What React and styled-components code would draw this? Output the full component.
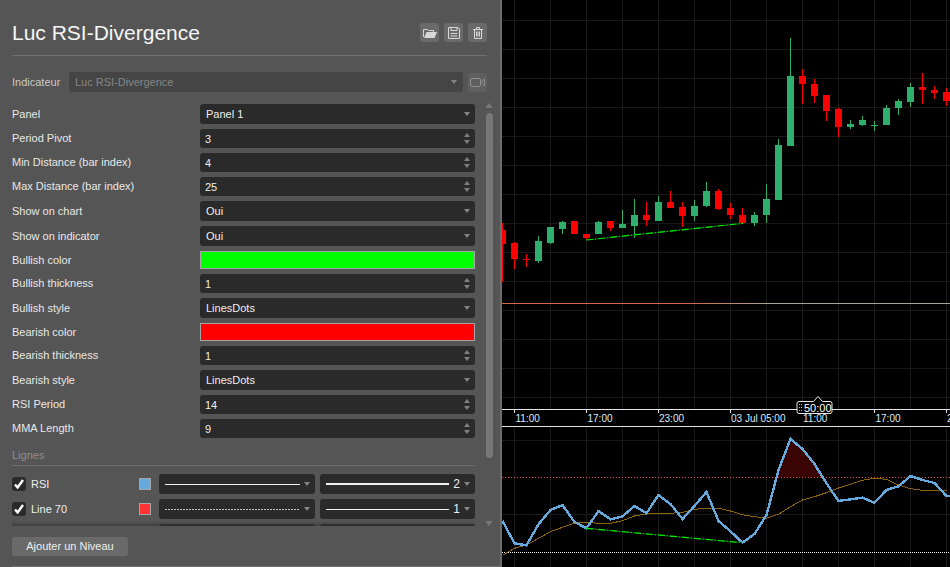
import styled, { createGlobalStyle } from "styled-components";

const GlobalStyle = createGlobalStyle`
  html, body { margin: 0; padding: 0; background: #000; }
  body { font-family: "Liberation Sans", Arial, sans-serif; }
`;

const Page = styled.div`
  display: flex;
  width: 950px;
  height: 567px;
  overflow: hidden;
`;

const Panel = styled.aside`
  flex: none;
  display: flex;
  flex-direction: column;
  box-sizing: border-box;
  width: 502px;
  height: 567px;
  padding: 23px 13px 0 12px;
  background: #555;
  border-right: 2px solid #6c6c6c;
  overflow: hidden;
`;

const Header = styled.header`
  display: flex;
  justify-content: space-between;
  height: 32px;
  border-bottom: 1px solid #707070;
`;

const Title = styled.h1`
  margin: -2px 0 0;
  font-size: 21px;
  font-weight: 400;
  line-height: 24px;
  color: #f6f6f6;
`;

const Tools = styled.div`
  display: flex;
  gap: 5px;
`;

const ToolButton = styled.button`
  display: flex;
  align-items: center;
  justify-content: center;
  width: 19px;
  height: 19px;
  padding: 0;
  border: 0;
  border-radius: 3px;
  background: ${(p) => (p.$dim ? "#5f5f5f" : "#6a6a6a")};
  color: ${(p) => (p.$dim ? "#8f8f8f" : "#d8d8d8")};
`;

const IndicatorRow = styled.div`
  display: flex;
  align-items: center;
  gap: 5px;
  margin-top: 16px;
  height: 20px;
`;

const IndicatorLabel = styled.span`
  width: 52px;
  font-size: 11px;
  color: #c8c8c8;
`;

const Arrow = styled.i`
  flex: none;
  width: 0;
  height: 0;
  margin-left: auto;
  border-left: 3px solid transparent;
  border-right: 3px solid transparent;
  border-top: 4px solid #858585;
`;

const Field = styled.div`
  display: flex;
  align-items: center;
  box-sizing: border-box;
  height: ${(p) => p.$h || 20}px;
  padding: 0 5px 0 ${(p) => p.$pad || 6}px;
  border-radius: 3px;
  background: #2a2a2a;
  font-size: 11px;
  color: #eee;
`;

const IndicatorField = styled(Field)`
  flex: 1;
  background: #454545;
  color: #868686;
  padding-right: 6px;
`;

const Body = styled.div`
  display: flex;
  gap: 10px;
  height: 422px;
  margin: 12px -6px 0 0;
`;

const ScrollPane = styled.div`
  position: relative;
  flex: none;
  width: 463px;
  overflow: hidden;

  &::after {
    content: "";
    position: absolute;
    left: -5px;
    right: -5px;
    bottom: 0;
    height: 5px;
    background: linear-gradient(rgba(50, 50, 50, 0), rgba(50, 50, 50, 0.6));
  }
`;

const Fields = styled.div`
  display: flex;
  flex-direction: column;
  gap: 5px;
`;

const Row = styled.div`
  display: grid;
  grid-template-columns: 188px 275px;
  align-items: center;
`;

const RowLabel = styled.label`
  margin-top: ${(p) => (p.$raised ? "-1px" : "0")};
  font-size: 11px;
  color: #e8e8e8;
`;

const Spin = styled.span`
  display: flex;
  flex-direction: column;
  gap: 3px;
  margin-left: auto;
`;

const SpinUp = styled.i`
  width: 0;
  height: 0;
  border-left: 3px solid transparent;
  border-right: 3px solid transparent;
  border-bottom: 4px solid #7f7f7f;
`;

const SpinDown = styled.i`
  width: 0;
  height: 0;
  border-left: 3px solid transparent;
  border-right: 3px solid transparent;
  border-top: 4px solid #7f7f7f;
`;

const ColorField = styled.div`
  box-sizing: border-box;
  height: 18px;
  border: 1px solid #a6a6a6;
  background: ${(p) => p.$color};
`;

const SectionTitle = styled.div`
  margin-top: 12px;
  height: 15px;
  font-size: 11px;
  line-height: 10px;
  color: #8e8e8e;
  border-bottom: 1px solid #6e6e6e;
`;

const Lines = styled.div`
  display: flex;
  flex-direction: column;
  gap: 5px;
  margin-top: 8px;
`;

const LineRow = styled.div`
  display: flex;
  align-items: center;
  justify-content: ${(p) => (p.$bare ? "flex-end" : "flex-start")};
  height: 20px;
`;

const CheckLabel = styled.label`
  display: flex;
  align-items: center;
  gap: 5px;
  width: 127px;
  font-size: 11px;
  color: #eee;
`;

const CheckBox = styled.span`
  display: flex;
  align-items: center;
  justify-content: center;
  width: 14px;
  height: 14px;
  border-radius: 3px;
  background: #2a2a2a;
  color: #fff;
`;

const Swatch = styled.span`
  box-sizing: border-box;
  width: 12px;
  height: 12px;
  margin-right: 8px;
  border: 1px solid #a6a6a6;
  background: ${(p) => p.$color};
`;

const LineField = styled(Field)`
  width: ${(p) => p.$w}px;
  margin-right: ${(p) => p.$mr || 0}px;
  gap: 4px;
`;

const LinePreview = styled.span`
  flex: 1;
  height: ${(p) => p.$size || 1}px;
  background: ${(p) =>
    p.$dotted ? "repeating-linear-gradient(90deg, #c4c4c4 0 2px, transparent 2px 3px)" : "#f0f0f0"};
`;

const LineValue = styled.span`
  font-size: 12px;
  color: #eee;
`;

const ScrollBar = styled.div`
  flex: none;
  display: flex;
  flex-direction: column;
  align-items: center;
  width: 8px;
`;

const ScrollUp = styled.i`
  width: 0;
  height: 0;
  margin-top: -1px;
  border-left: 4px solid transparent;
  border-right: 4px solid transparent;
  border-bottom: 5px solid #777;
`;

const ScrollDown = styled.i`
  width: 0;
  height: 0;
  margin-top: 63px;
  border-left: 4px solid transparent;
  border-right: 4px solid transparent;
  border-top: 5px solid #777;
`;

const ScrollThumb = styled.div`
  width: 7px;
  height: 345px;
  margin-top: 5px;
  border-radius: 4px;
  background: #777;
`;

const Footer = styled.footer`
  padding-top: 11px;
`;

const AddButton = styled.button`
  display: block;
  width: 116px;
  height: 19px;
  padding: 0 0 1px;
  border: 0;
  border-radius: 3px;
  background: #6a6a6a;
  font-family: inherit;
  font-size: 11px;
  color: #eee;
`;

const FootRule = styled.div`
  margin: 10px -13px 0 0;
  border-top: 1px solid #707070;
`;

const ChartArea = styled.main`
  flex: none;
  width: 448px;
  height: 567px;
  background: #000;
`;

const ChartSvg = styled.svg`
  display: block;
  font-family: "Liberation Sans", Arial, sans-serif;
`;

const FIELDS = [
  { label: "Panel", type: "select", value: "Panel 1" },
  { label: "Period Pivot", type: "number", value: "3" },
  { label: "Min Distance (bar index)", type: "number", value: "4" },
  { label: "Max Distance (bar index)", type: "number", value: "25" },
  { label: "Show on chart", type: "select", value: "Oui" },
  { label: "Show on indicator", type: "select", value: "Oui" },
  { label: "Bullish color", type: "color", value: "#00ff00" },
  { label: "Bullish thickness", type: "number", value: "1" },
  { label: "Bullish style", type: "select", value: "LinesDots" },
  { label: "Bearish color", type: "color", value: "#ff0000" },
  { label: "Bearish thickness", type: "number", value: "1" },
  { label: "Bearish style", type: "select", value: "LinesDots" },
  { label: "RSI Period", type: "number", value: "14" },
  { label: "MMA Length", type: "number", value: "9" },
];

const LINES = [
  { name: "RSI", color: "#66a9dc", dotted: false, size: 2, width: "2" },
  { name: "Line 70", color: "#ff3333", dotted: true, size: 1, width: "1" },
];

// [wick top, body top, body bottom, wick bottom, up]
const CANDLES = [
  [223, 230, 244, 282, 0], [242, 243, 259, 269, 0], [254, 259, 260, 267, 0], [236, 241, 261, 263, 1],
  [227, 227, 243, 244, 1], [221, 222, 229, 234, 1], [221, 221, 234, 234, 0], [234, 234, 238, 240, 0],
  [221, 222, 234, 234, 1], [221, 221, 228, 231, 0], [210, 224, 228, 228, 1], [199, 215, 226, 238, 1],
  [202, 215, 220, 226, 0], [196, 202, 221, 221, 1], [191, 202, 208, 208, 0], [202, 207, 216, 227, 0],
  [200, 206, 216, 221, 1], [182, 191, 206, 207, 1], [189, 191, 209, 210, 0], [203, 208, 215, 219, 0],
  [208, 215, 223, 224, 0], [212, 215, 223, 226, 1], [184, 199, 215, 223, 1], [139, 145, 200, 200, 1],
  [38, 76, 146, 146, 1], [69, 76, 84, 104, 0], [79, 84, 96, 103, 0], [95, 95, 111, 121, 0],
  [108, 109, 127, 137, 0], [120, 124, 127, 129, 1], [116, 120, 125, 126, 1], [121, 125, 126, 131, 1],
  [105, 108, 125, 125, 1], [99, 101, 108, 115, 1], [83, 87, 102, 107, 1], [73, 87, 90, 104, 0],
  [86, 90, 93, 99, 0], [88, 92, 101, 106, 0],
];

const RSI = [
  521, 543.3, 545.3, 524.3, 510, 505, 522, 528.3, 511, 519.3, 516.3, 506, 513.3, 495, 504, 519, 506, 492, 521,
  531.3, 542.7, 534, 515, 470, 439, 449, 464, 483.3, 501, 499.3, 497.7, 502.7, 490, 486.3, 476, 480, 483, 496,
];

const MMA = [
  555.3, 548.3, 545, 538.3, 531.7, 527.3, 523.3, 522.3, 523.3, 523.3, 520.7, 516, 514, 513.3, 513.3, 512.3, 509.3,
  508.3, 508.3, 511, 514.7, 516.7, 518.3, 514.3, 506.7, 500, 496.7, 492.7, 488, 484.3, 480.3, 478.3, 479.3, 485,
  488.7, 490.3, 490.3, 490.3,
];

const TIMES = [
  { x: 13.5, label: "11:00" },
  { x: 85.5, label: "17:00" },
  { x: 157, label: "23:00" },
  { x: 229, label: "03 Jul 05:00" },
  { x: 301, label: "11:00" },
  { x: 373.5, label: "17:00" },
  { x: 445, label: "23:00" },
];

const barX = (i) => 0.5 + 12 * i;
const toPoints = (ys) => ys.map((y, i) => `${barX(i)},${y}`).join(" ");

const GRID_X = Array.from({ length: 13 }, (_, i) => 12.5 + 36 * i);
const GRID_Y = [...Array.from({ length: 14 }, (_, i) => 20.5 + 29 * i), 440.5, 514.5];
const TICKS = [12.5, 84.5, 156.5, 228.5, 300.5, 372.5, 444.5];

function FolderIcon() {
  return (
    <svg width="14" height="10" viewBox="0 0 14 10">
      <path d="M.5 9V1.5h4l1 1h5V4" fill="none" stroke="currentColor" />
      <path d="M1 10 3.5 4H14l-2.5 6z" fill="currentColor" />
    </svg>
  );
}

function SaveIcon() {
  return (
    <svg width="12" height="12" viewBox="0 0 12 12" fill="none" stroke="currentColor">
      <path d="M.5.5h9.5l1.5 1.5v9.5H.5z" />
      <path d="M3 .5v3h6v-3M2.5 6.5h7M2.5 9h7" />
    </svg>
  );
}

function TrashIcon() {
  return (
    <svg width="10" height="12" viewBox="0 0 10 12" fill="none" stroke="currentColor">
      <path d="M0 2.5h10M3.5 2.5V.5h3v2M1.5 2.5v9h7v-9M3.5 4.5v5M5 4.5v5M6.5 4.5v5" />
    </svg>
  );
}

function CameraIcon() {
  return (
    <svg width="15" height="9" viewBox="0 0 15 9" fill="none" stroke="currentColor">
      <rect x=".5" y=".5" width="10" height="8" rx="1.5" />
      <path d="M14.5 1 11 4.5 14.5 8z" />
    </svg>
  );
}

function CheckIcon() {
  return (
    <svg width="10" height="10" viewBox="0 0 10 10" fill="none" stroke="currentColor" strokeWidth="2.4">
      <path d="M1 5.5 3.6 8.5 9 1" />
    </svg>
  );
}

function FormField({ field }) {
  if (field.type === "color") return <ColorField $color={field.value} />;
  if (field.type === "number") {
    return (
      <Field $h={19} $pad={5}>
        {field.value}
        <Spin>
          <SpinUp />
          <SpinDown />
        </Spin>
      </Field>
    );
  }
  return (
    <Field>
      {field.value}
      <Arrow />
    </Field>
  );
}

function Chart() {
  return (
    <ChartSvg width="448" height="567" viewBox="0 0 448 567">
      <g stroke="#191919" shapeRendering="crispEdges">
        {GRID_X.map((x) => (
          <line key={x} x1={x} x2={x} y1="0" y2="567" />
        ))}
        {GRID_Y.map((y) => (
          <line key={y} x1="0" x2="448" y1={y} y2={y} />
        ))}
      </g>

      {CANDLES.map(([top, open, close, bottom, up], i) => {
        const c = barX(i);
        const color = up ? "#2eb06c" : "#ff0000";
        return (
          <g key={i} fill={color} shapeRendering="crispEdges">
            <rect x={c - 0.5} y={top} width="1" height={bottom - top} />
            <rect x={c - 3.5} y={open} width="7" height={close - open} />
          </g>
        );
      })}
      <line x1="84.3" y1="240" x2="241" y2="223.3" stroke="#044404" strokeWidth="1.2" />
      <line x1="84.3" y1="240" x2="241" y2="223.3" stroke="#00ec00" strokeWidth="1.2" strokeDasharray="7 2 1 2" />

      <defs>
        <linearGradient id="paneLine" x1="0" x2="1" y1="0" y2="0">
          <stop offset="0" stopColor="#cf6a45" />
          <stop offset="0.42" stopColor="#cf6a45" />
          <stop offset="0.6" stopColor="#a9a39a" />
          <stop offset="1" stopColor="#a9a39a" />
        </linearGradient>
      </defs>
      <rect x="0" y="303" width="448" height="1" fill="url(#paneLine)" />

      <rect x="0" y="410" width="448" height="16" fill="#000" />
      <g stroke="#e4e4e4" shapeRendering="crispEdges">
        <line x1="0" x2="448" y1="409.5" y2="409.5" />
        <line x1="0" x2="448" y1="426.5" y2="426.5" />
        {TICKS.map((x) => (
          <line key={x} x1={x} x2={x} y1="409" y2="413" />
        ))}
      </g>
      {TIMES.map((t) => (
        <text key={`${t.x}`} x={t.x} y="422" fontSize="10" fill="#dcebfa">
          {t.label}
        </text>
      ))}

      <path
        d="M297 401.5H311.5L316 396.5L320.5 401.5H328q2 0 2 2v8q0 2-2 2H297q-2 0-2-2v-8q0-2 2-2z"
        fill="#000"
        stroke="#e8e8e8"
      />
      <g fill="#b8b8b8">
        {[0, 1, 2].map((r) => (
          <g key={r}>
            <rect x="297" y={404 + r * 3} width="1" height="1" />
            <rect x="299" y={404 + r * 3} width="1" height="1" />
          </g>
        ))}
      </g>
      <text x="302" y="411.5" fontSize="11" fill="#fff">
        50:00
      </text>

      <polygon points="275.3,477.3 276.3,470 288.3,439 300.3,449 312.3,464 320.7,477.3" fill="#3a0404" />
      <line x1="0" x2="448" y1="477.5" y2="477.5" stroke="#e04040" strokeDasharray="1 2" shapeRendering="crispEdges" />
      <line x1="0" x2="448" y1="552.5" y2="552.5" stroke="#f0f0f0" strokeDasharray="1 1" shapeRendering="crispEdges" />
      <polyline points={toPoints(MMA)} fill="none" stroke="#8a6410" shapeRendering="crispEdges" />
      <polyline
        points={`${toPoints(RSI)} 448,496`}
        fill="none"
        stroke="#66a9dc"
        strokeWidth="2.4"
        shapeRendering="crispEdges"
      />
      <line x1="84.3" y1="528.3" x2="239.7" y2="542.7" stroke="#044404" strokeWidth="1.2" />
      <line x1="84.3" y1="528.3" x2="239.7" y2="542.7" stroke="#00ec00" strokeWidth="1.2" strokeDasharray="7 2 1 2" />
    </ChartSvg>
  );
}

export default function App() {
  return (
    <Page>
      <GlobalStyle />
      <Panel>
        <Header>
          <Title>Luc RSI-Divergence</Title>
          <Tools>
            <ToolButton aria-label="Ouvrir">
              <FolderIcon />
            </ToolButton>
            <ToolButton aria-label="Enregistrer">
              <SaveIcon />
            </ToolButton>
            <ToolButton aria-label="Supprimer">
              <TrashIcon />
            </ToolButton>
          </Tools>
        </Header>

        <IndicatorRow>
          <IndicatorLabel>Indicateur</IndicatorLabel>
          <IndicatorField>
            Luc RSI-Divergence
            <Arrow />
          </IndicatorField>
          <ToolButton $dim aria-label="Video">
            <CameraIcon />
          </ToolButton>
        </IndicatorRow>

        <Body>
          <ScrollPane>
            <Fields>
              {FIELDS.map((field) => (
                <Row key={field.label}>
                  <RowLabel $raised={field.type === "number"}>{field.label}</RowLabel>
                  <FormField field={field} />
                </Row>
              ))}
            </Fields>
            <SectionTitle>Lignes</SectionTitle>
            <Lines>
              {LINES.map((line) => (
                <LineRow key={line.name}>
                  <CheckLabel>
                    <CheckBox>
                      <CheckIcon />
                    </CheckBox>
                    {line.name}
                  </CheckLabel>
                  <Swatch $color={line.color} />
                  <LineField $w={156} $mr={5}>
                    <LinePreview $dotted={line.dotted} />
                    <Arrow />
                  </LineField>
                  <LineField $w={155}>
                    <LinePreview $size={line.size} />
                    <LineValue>{line.width}</LineValue>
                    <Arrow />
                  </LineField>
                </LineRow>
              ))}
              <LineRow $bare>
                <LineField $w={156} $mr={5} />
                <LineField $w={155} />
              </LineRow>
            </Lines>
          </ScrollPane>
          <ScrollBar>
            <ScrollUp />
            <ScrollThumb />
            <ScrollDown />
          </ScrollBar>
        </Body>

        <Footer>
          <AddButton>Ajouter un Niveau</AddButton>
          <FootRule />
        </Footer>
      </Panel>
      <ChartArea>
        <Chart />
      </ChartArea>
    </Page>
  );
}
